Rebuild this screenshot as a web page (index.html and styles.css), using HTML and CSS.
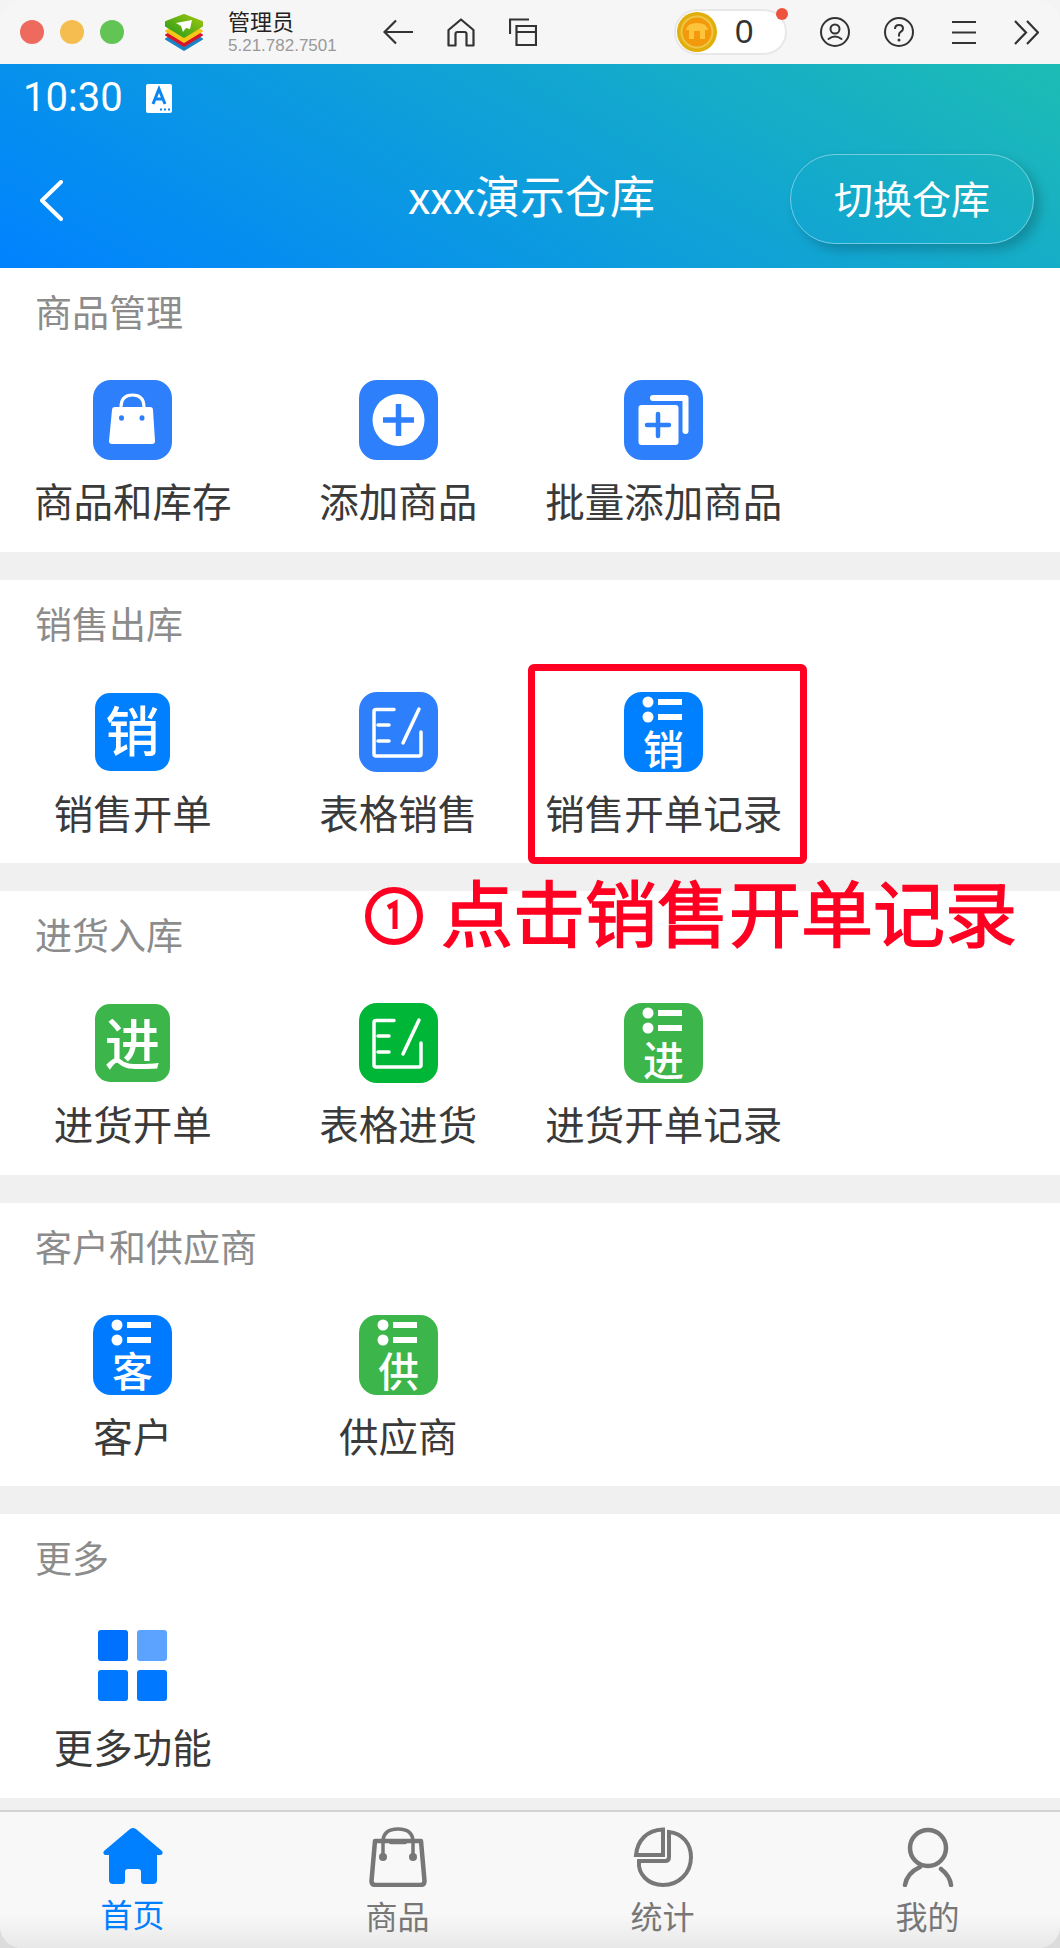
FILE: index.html
```html
<!DOCTYPE html>
<html lang="zh-CN">
<head>
    <meta charset="UTF-8">
    <meta name="viewport" content="width=device-width, initial-scale=1.0">
    <title>管理员</title>
    <link rel="stylesheet" href="styles.css">
</head>
<body>
    <div class="window">
        <!-- 标题栏 -->
        <div class="titlebar">
            <div class="lights">
                <span class="light red"></span>
                <span class="light yellow"></span>
                <span class="light green"></span>
            </div>
            <svg class="logo" viewBox="0 0 40 37" width="40" height="37">
                <defs>
                    <linearGradient id="logo-top" x1="0" y1="1" x2="1" y2="0">
                        <stop offset="0" stop-color="#1f9a1c"/>
                        <stop offset="1" stop-color="#a2c70c"/>
                    </linearGradient>
                </defs>
                <g stroke-width="2" stroke-linejoin="round">
                    <path d="M2 25 20 15l18 10-18 11z" fill="#1c82c6" stroke="#1c82c6"/>
                    <path d="M2 21 20 11l18 10-18 11z" fill="#d8142c" stroke="#d8142c"/>
                    <path d="M2 17 20 7l18 10-18 11z" fill="#f7c61a" stroke="#f7c61a"/>
                    <path d="M2 8 20 1l18 7v4L20 23 2 12z" fill="url(#logo-top)" stroke="url(#logo-top)"/>
                </g>
                <path d="M28 6 12 9l5 3 2 6 3-4 4 1z" fill="#fff"/>
            </svg>
            <div class="app-name">
                <div class="name">管理员</div>
                <div class="version">5.21.782.7501</div>
            </div>
            <div class="nav-icons">
                <svg viewBox="0 0 30 26" width="30" height="26"><path d="M30 13H1.500M13 1.500 1.500 13 13 24.500" fill="none" stroke="#333" stroke-width="2.200"/></svg>
                <svg viewBox="0 0 28 29" width="28" height="29"><path d="M1.500 27.500V12L14 1.500 26.500 12v15.500h-7V16q0-2-2-2h-7q-2 0-2 2v11.500z" fill="none" stroke="#333" stroke-width="2.200" stroke-linejoin="round"/></svg>
                <svg viewBox="0 0 28 28" width="28" height="28"><path d="M7.500 27V8H27v19zM7.500 14H27M1 16V1.500h19" fill="none" stroke="#333" stroke-width="2.200"/></svg>
            </div>
            <div class="coin-pill">
                <svg class="coin" viewBox="0 0 40 40" width="40" height="40">
                    <circle cx="20" cy="20" r="20" fill="#e2ae0c"/>
                    <circle cx="20" cy="20" r="16.500" fill="#eec645"/>
                    <circle cx="20" cy="20" r="14.500" fill="#f29a0c"/>
                    <path d="M9 18q1-7 11-7t11 7h-3v9h-5v-8h-6v8h-5v-9z" fill="#fcc43a"/>
                </svg>
                <span class="coin-count">0</span>
                <span class="coin-dot"></span>
            </div>
            <div class="tool-icons">
                <svg viewBox="0 0 30 30" width="30" height="30"><g fill="none" stroke="#333" stroke-width="2"><circle cx="15" cy="15" r="14"/><circle cx="15" cy="12" r="4.500"/><path d="M8.500 22q6.500-5 13 0" stroke-linecap="round"/></g></svg>
                <svg viewBox="0 0 30 30" width="30" height="30"><g fill="none" stroke="#333" stroke-width="2"><circle cx="15" cy="15" r="14"/><path d="M11 12q0-4 4-4t4 3.500q0 2-2 3.200T15 18v1.500"/></g><circle cx="15" cy="23" r="1.500" fill="#333"/></svg>
                <svg viewBox="0 0 24 24" width="24" height="24"><path d="M0 2h24M0 12.500h24M0 23h24" stroke="#333" stroke-width="2.200"/></svg>
                <svg viewBox="0 0 25 25" width="25" height="25"><path d="M1 1l11 11.500L1 24M13 1l11 11.500L13 24" fill="none" stroke="#333" stroke-width="2.200"/></svg>
            </div>
        </div>

        <!-- 蓝色头部 -->
        <div class="app-header">
            <div class="status-bar">
                <span class="time">10:30</span>
                <svg class="status-a" viewBox="0 0 26 29" width="26" height="29">
                    <rect width="26" height="29" rx="2" fill="#fff"/>
                    <path d="M7 20 13 5l6 15M9.500 15h7" fill="none" stroke="#0a86f2" stroke-width="3"/>
                    <path d="M14 25.500h2M18 25.500h2M22 25.500h2" stroke="#0a86f2" stroke-width="2"/>
                </svg>
            </div>
            <div class="header-row">
                <svg class="back" viewBox="0 0 24 41" width="24" height="41"><path d="M22 2 3 20.500 22 39" fill="none" stroke="#fff" stroke-width="4" stroke-linecap="round" stroke-linejoin="round"/></svg>
                <div class="header-title">xxx演示仓库</div>
                <div class="switch-btn">切换仓库</div>
            </div>
        </div>

        <div class="main">
            <!-- 商品管理 -->
            <div class="section">
                <div class="section-title">商品管理</div>
                <div class="grid">
                    <div class="tile">
                        <svg class="ico" viewBox="0 0 79 80"><rect width="79" height="80" rx="18" fill="#2e7ffb"/>
                            <path d="M19 30q0-3 3-3h35q3 0 3 3l2 31q0 3-3 3H19q-3 0-3-3z" fill="#fff"/>
                            <path d="M28 27q0-12 11.500-12T51 27" fill="none" stroke="#fff" stroke-width="3"/>
                            <ellipse cx="28.500" cy="38" rx="2.500" ry="2.800" fill="#2e7ffb"/><ellipse cx="49" cy="38" rx="2.500" ry="2.800" fill="#2e7ffb"/>
                        </svg>
                        <div class="tile-label">商品和库存</div>
                    </div>
                    <div class="tile">
                        <svg class="ico" viewBox="0 0 79 80"><rect width="79" height="80" rx="18" fill="#2e7ffb"/>
                            <circle cx="39.500" cy="40" r="26" fill="#fff"/>
                            <path d="M24 40h31M39.500 24v32" stroke="#2e7ffb" stroke-width="5.500"/>
                        </svg>
                        <div class="tile-label">添加商品</div>
                    </div>
                    <div class="tile">
                        <svg class="ico" viewBox="0 0 79 80"><rect width="79" height="80" rx="18" fill="#2e7ffb"/>
                            <rect x="14.500" y="25" width="40" height="40" rx="3" fill="#fff"/>
                            <path d="M29 18h32.500v33" fill="none" stroke="#fff" stroke-width="6" stroke-linecap="round" stroke-linejoin="round"/>
                            <path d="M23 45h22M34 34v22" stroke="#2e7ffb" stroke-width="4.500" stroke-linecap="round"/>
                        </svg>
                        <div class="tile-label">批量添加商品</div>
                    </div>
                </div>
            </div>

            <!-- 销售出库 -->
            <div class="section">
                <div class="section-title">销售出库</div>
                <div class="grid">
                    <div class="tile">
                        <svg class="ico" viewBox="0 0 79 80"><rect x="2" y="1" width="75" height="78" rx="15" fill="#0080ff"/>
                            <text class="ico-char" x="39.500" y="60" font-size="54">销</text>
                        </svg>
                        <div class="tile-label">销售开单</div>
                    </div>
                    <div class="tile">
                        <svg class="ico" viewBox="0 0 79 80"><rect width="79" height="80" rx="18" fill="#2e7ffb"/>
                            <path d="M35 17.500H17q-2 0-2 2V62q0 2 2 2h43q2 0 2-2V40M19 33h11M19 49h11M60 17 44 51" fill="none" stroke="#fff" stroke-width="3.500" stroke-linecap="round"/>
                        </svg>
                        <div class="tile-label">表格销售</div>
                    </div>
                    <div class="tile">
                        <svg class="ico" viewBox="0 0 79 80"><rect width="79" height="80" rx="18" fill="#0080ff"/>
                            <circle cx="24" cy="10" r="5.500" fill="#fff"/><circle cx="24" cy="25" r="5.500" fill="#fff"/>
                            <rect x="34" y="7" width="24" height="6" fill="#fff"/><rect x="34" y="22" width="24" height="6" fill="#fff"/>
                            <text class="ico-char" x="39.500" y="73" font-size="41">销</text>
                        </svg>
                        <div class="tile-label">销售开单记录</div>
                        <div class="mark-box"></div>
                    </div>
                </div>
            </div>

            <!-- 进货入库 -->
            <div class="section">
                <div class="section-title">进货入库</div>
                <div class="grid">
                    <div class="tile">
                        <svg class="ico" viewBox="0 0 79 80"><rect x="2" y="1" width="75" height="78" rx="15" fill="#3cb54a"/>
                            <text class="ico-char" x="39.500" y="62" font-size="56">进</text>
                        </svg>
                        <div class="tile-label">进货开单</div>
                    </div>
                    <div class="tile">
                        <svg class="ico" viewBox="0 0 79 80"><rect width="79" height="80" rx="18" fill="#00b636"/>
                            <path d="M35 17.500H17q-2 0-2 2V62q0 2 2 2h43q2 0 2-2V40M19 33h11M19 49h11M60 17 44 51" fill="none" stroke="#fff" stroke-width="3.500" stroke-linecap="round"/>
                        </svg>
                        <div class="tile-label">表格进货</div>
                    </div>
                    <div class="tile">
                        <svg class="ico" viewBox="0 0 79 80"><rect width="79" height="80" rx="18" fill="#3cb54a"/>
                            <circle cx="24" cy="10" r="5.500" fill="#fff"/><circle cx="24" cy="25" r="5.500" fill="#fff"/>
                            <rect x="34" y="7" width="24" height="6" fill="#fff"/><rect x="34" y="22" width="24" height="6" fill="#fff"/>
                            <text class="ico-char" x="39.500" y="73" font-size="41">进</text>
                        </svg>
                        <div class="tile-label">进货开单记录</div>
                    </div>
                </div>
            </div>

            <!-- 客户和供应商 -->
            <div class="section">
                <div class="section-title">客户和供应商</div>
                <div class="grid">
                    <div class="tile">
                        <svg class="ico" viewBox="0 0 79 80"><rect width="79" height="80" rx="18" fill="#007aff"/>
                            <circle cx="24" cy="10" r="5.500" fill="#fff"/><circle cx="24" cy="25" r="5.500" fill="#fff"/>
                            <rect x="34" y="7" width="24" height="6" fill="#fff"/><rect x="34" y="22" width="24" height="6" fill="#fff"/>
                            <text class="ico-char" x="39.500" y="72" font-size="41">客</text>
                        </svg>
                        <div class="tile-label">客户</div>
                    </div>
                    <div class="tile">
                        <svg class="ico" viewBox="0 0 79 80"><rect width="79" height="80" rx="18" fill="#3cb54a"/>
                            <circle cx="24" cy="10" r="5.500" fill="#fff"/><circle cx="24" cy="25" r="5.500" fill="#fff"/>
                            <rect x="34" y="7" width="24" height="6" fill="#fff"/><rect x="34" y="22" width="24" height="6" fill="#fff"/>
                            <text class="ico-char" x="39.500" y="72" font-size="41">供</text>
                        </svg>
                        <div class="tile-label">供应商</div>
                    </div>
                </div>
            </div>

            <!-- 更多 -->
            <div class="section">
                <div class="section-title">更多</div>
                <div class="grid">
                    <div class="tile">
                        <svg class="ico" viewBox="0 0 79 80">
                            <rect x="5" y="4" width="30" height="31" rx="3" fill="#0070ff"/>
                            <rect x="44" y="4" width="30" height="31" rx="3" fill="#5ca2ff"/>
                            <rect x="5" y="44" width="30" height="31" rx="3" fill="#0078ff"/>
                            <rect x="44" y="44" width="30" height="31" rx="3" fill="#0078ff"/>
                        </svg>
                        <div class="tile-label">更多功能</div>
                    </div>
                </div>
            </div>

            <!-- 红色提示文字 -->
            <div class="callout">
                <svg class="callout-num" viewBox="0 0 60 60" width="60" height="60">
                    <circle cx="30" cy="30" r="26" fill="none" stroke="#ff0022" stroke-width="6"/>
                    <path d="M24 21.500 31 17.500V43" fill="none" stroke="#ff0022" stroke-width="5"/>
                </svg>
                <span class="callout-text">点击销售开单记录</span>
            </div>
        </div>

        <!-- 底部导航 -->
        <div class="tabbar">
            <div class="tab active">
                <svg viewBox="0 0 60 58" width="60" height="58"><path d="M30 1q1.500 0 3 1l26 22q1 1 .5 2.500T57 28h-3v25q0 4-4 4h-9q-3 0-3-3V45q0-3-3-3h-10q-3 0-3 3v9q0 3-3 3h-9q-4 0-4-4V28H3q-2 0-2.500-1.500T1 24L27 2q1.500-1 3-1z" fill="#0080ff"/></svg>
                <div class="tab-label">首页</div>
            </div>
            <div class="tab">
                <svg viewBox="0 0 60 60" width="60" height="60"><g fill="none" stroke="#777" stroke-width="4.500" stroke-linejoin="round"><path d="M7 14h46l3.500 40q0 4-4 4h-45q-4 0-4-4z"/><path d="M15 28V15Q15 2 30 2t15 13v13" stroke-width="3.500"/><path d="M23 15h14" stroke-linecap="round"/></g><circle cx="15" cy="30" r="4" fill="#777"/><circle cx="45" cy="30" r="4" fill="#777"/></svg>
                <div class="tab-label">商品</div>
            </div>
            <div class="tab">
                <svg viewBox="0 0 60 60" width="60" height="60"><g fill="none" stroke="#777" stroke-width="4"><path d="M30 2.500V28H3q1-11 8-18t19-7.500z"/><path d="M36 5q10 1 16 8t6 17q0 12-8 20t-20 8q-11 0-18-7T6 34h26q4 0 4-4z"/></g></svg>
                <div class="tab-label">统计</div>
            </div>
            <div class="tab">
                <svg viewBox="0 0 60 60" width="60" height="60"><g fill="none" stroke="#777" stroke-width="4.500" stroke-linecap="round"><circle cx="30" cy="21" r="18"/><path d="M7 58q2-12 15-18M53 58q-1-9-10-16"/></g></svg>
                <div class="tab-label">我的</div>
            </div>
        </div>
    </div>
</body>
</html>
```

FILE: styles.css
```css
* {
    box-sizing: border-box;
}

html, body {
    margin: 0;
    height: 100%;
}

body {
    background: linear-gradient(#f4f4f4, #dcdcdc);
    font-family: "Noto Sans CJK SC", "Noto Sans", sans-serif;
}

.window {
    width: 1060px;
    height: 1948px;
    display: flex;
    flex-direction: column;
    border-radius: 22px;
    overflow: hidden;
    background: #f0f0f0;
}

/* title bar */
.titlebar {
    height: 64px;
    flex: none;
    display: flex;
    align-items: center;
    background: #f6f6f6;
    padding-left: 20px;
}

.lights {
    display: flex;
    gap: 16px;
}

.light {
    width: 24px;
    height: 24px;
    border-radius: 50%;
}

.light.red { background: #ee6a5f; }
.light.yellow { background: #f5bd4f; }
.light.green { background: #61c454; }

.logo {
    margin-left: 40px;
}

.app-name {
    margin-left: 24px;
    width: 131px;
}

.name {
    font-size: 22px;
    line-height: 24px;
    color: #222;
}

.version {
    font-family: "Liberation Sans", sans-serif;
    font-size: 17px;
    line-height: 22px;
    margin-top: 3px;
    color: #999;
}

.nav-icons {
    display: flex;
    align-items: center;
    gap: 34px;
    margin-left: 24px;
}

.coin-pill {
    position: relative;
    width: 113px;
    height: 46px;
    margin-left: 137px;
    display: flex;
    align-items: center;
    background: #fff;
    border: 2px solid #e8e8e8;
    border-radius: 23px;
    padding-left: 1px;
}

.coin-count {
    font-family: "Liberation Sans", sans-serif;
    font-size: 33px;
    color: #333;
    margin-left: 18px;
}

.coin-dot {
    position: absolute;
    top: -3px;
    right: -3px;
    width: 12px;
    height: 12px;
    background: #ee5340;
    border-radius: 50%;
}

.tool-icons {
    display: flex;
    align-items: center;
    gap: 34px;
    margin-left: 33px;
}

.tool-icons svg:nth-child(n+3) {
    margin-left: 4px;
}

/* blue header */
.app-header {
    height: 204px;
    flex: none;
    background: linear-gradient(30deg, #0082ff, #1dbcb4);
    color: #fff;
}

.status-bar {
    height: 68px;
    display: flex;
    align-items: center;
    padding-left: 23px;
}

.time {
    font-family: Roboto, sans-serif;
    font-size: 40px;
    line-height: 68px;
}

.status-a {
    margin-left: 23px;
}

.header-row {
    height: 136px;
    padding: 22px 26px 0;
    display: grid;
    grid-template-columns: 1fr auto 1fr;
    align-items: start;
}

.back {
    margin: 26px 0 0 13px;
}

.header-title {
    margin: -4px 0 0 3px;
    font-size: 45px;
    line-height: 90px;
}

.switch-btn {
    justify-self: end;
    width: 244px;
    height: 90px;
    line-height: 84px;
    text-align: center;
    font-size: 39px;
    border: 1px solid rgba(255,255,255,0.4);
    border-radius: 45px;
    box-shadow: 6px 6px 12px rgba(0,0,0,0.2);
}

/* sections */
.main {
    position: relative;
    flex: 1;
    overflow: hidden;
}

.section {
    background: #fff;
    height: 283.5px;
    margin-bottom: 28px;
    padding-top: 18px;
}

.section-title {
    font-size: 37px;
    line-height: 50px;
    color: #8c8c8c;
    padding-left: 35px;
}

.grid {
    display: grid;
    grid-template-columns: repeat(4, 265.500px);
    padding-top: 44px;
}

.tile {
    position: relative;
    display: flex;
    flex-direction: column;
    align-items: center;
}

.ico {
    width: 79px;
    height: 80px;
    overflow: visible;
}

.ico-char {
    fill: #fff;
    font-weight: 500;
    text-anchor: middle;
}

.tile-label {
    font-size: 39.500px;
    line-height: 56px;
    margin-top: 12px;
    color: #3a3a3a;
    white-space: nowrap;
}

.mark-box {
    position: absolute;
    left: -3.500px;
    top: -28px;
    width: 279px;
    height: 200px;
    border: 7px solid #ff0022;
    border-radius: 6px;
}

.callout {
    position: absolute;
    left: 364px;
    top: 597px;
    display: flex;
    align-items: center;
    gap: 17px;
}

.callout-text {
    font-size: 72px;
    line-height: 90px;
    padding-bottom: 12px;
    -webkit-text-stroke: 1.5px #ff0022;
    color: #ff0022;
    white-space: nowrap;
}

/* tab bar */
.tabbar {
    height: 138px;
    flex: none;
    display: grid;
    grid-template-columns: repeat(4, 1fr);
    border-top: 2px solid #d3d3d3;
    background: linear-gradient(#f8f8f8 75%, #e8e8e8);
}

.tab {
    display: flex;
    flex-direction: column;
    align-items: center;
    padding-top: 15px;
    color: #777;
}

.tab-label {
    font-size: 32px;
    line-height: 40px;
    margin-top: 8px;
}

.tab.active {
    color: #0080ff;
}
```
